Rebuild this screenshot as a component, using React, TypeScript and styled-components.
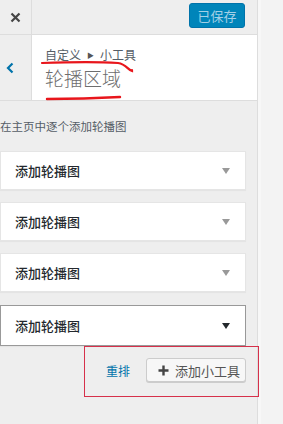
import React from "react";
import styled, { createGlobalStyle } from "styled-components";

const GlobalStyle = createGlobalStyle`
  html, body {
    margin: 0;
    padding: 0;
    background: #eeeeee;
  }
  * {
    box-sizing: border-box;
  }
`;

const Page = styled.div`
  position: relative;
  display: flex;
  width: 283px;
  height: 424px;
  overflow: hidden;
  font-family: "Noto Sans CJK SC", "Noto Sans", sans-serif;
  color: #555d66;
`;

const Sidebar = styled.div`
  display: flex;
  flex-direction: column;
  width: 258px;
  background: #eeeeee;
  border-right: 1px solid #dddddd;
`;

const Gutter = styled.div`
  flex: 1;
  background: #f3f3f3;
  border-left: 3px solid #f7f7f7;
`;

const Header = styled.div`
  display: flex;
  align-items: center;
  height: 35px;
  border-bottom: 1px solid #dddddd;
`;

const CloseButton = styled.div`
  display: flex;
  align-items: center;
  justify-content: center;
  width: 32px;
  height: 100%;
  border-right: 1px solid #dddddd;
  color: #444;
`;

const SaveButton = styled.button`
  margin-left: auto;
  margin-right: 12px;
  margin-bottom: 4px;
  width: 56px;
  height: 25px;
  padding: 0;
  border: 1px solid #0073aa;
  border-radius: 3px;
  background: #0085ba;
  color: #a3d0e6;
  font-family: inherit;
  font-size: 13px;
  line-height: 23px;
`;

const TitleRow = styled.div`
  display: flex;
  height: 66px;
  border-bottom: 1px solid #dddddd;
`;

const BackButton = styled.div`
  display: flex;
  align-items: center;
  padding-left: 6px;
  width: 32px;
  border-right: 1px solid #dddddd;
  color: #0073aa;
`;

const TitleBox = styled.div`
  position: relative;
  flex: 1;
  background: #ffffff;
  padding: 11px 0 0 13px;
`;

const Crumb = styled.div`
  font-size: 12px;
  line-height: 18px;
  color: #555d66;
  display: flex;
  align-items: center;
  gap: 6px;
`;

const Caret = styled.span`
  font-size: 7px;
  color: #555;
`;

const Title = styled.div`
  margin-top: 1px;
  font-size: 19px;
  font-weight: 300;
  line-height: 26px;
  color: #6d6d6d;
`;

const Scribble = styled.svg`
  position: absolute;
  left: 0;
  top: 0;
  overflow: visible;
  pointer-events: none;
`;

const Body = styled.div`
  display: flex;
  flex-direction: column;
  padding: 16px 11px 0 0;
`;

const Description = styled.p`
  margin: 0 0 16px;
  font-size: 11.5px;
  line-height: 18px;
  color: #555d66;
`;

const WidgetList = styled.div`
  display: flex;
  flex-direction: column;
  gap: 12px;
`;

const Widget = styled.div<{ $active?: boolean }>`
  display: flex;
  align-items: center;
  justify-content: space-between;
  height: ${(p) => (p.$active ? 41 : 39)}px;
  margin-top: ${(p) => (p.$active ? 1 : 0)}px;
  padding: 0 15px 0 14px;
  background: #ffffff;
  border: 1px solid ${(p) => (p.$active ? "#999999" : "#e5e5e5")};
  box-shadow: 0 1px 1px rgba(0, 0, 0, 0.04);
  font-size: 13px;
  font-weight: 500;
  color: #23282d;
`;

const Arrow = styled.span<{ $active?: boolean }>`
  width: 0;
  height: 0;
  margin-top: 1px;
  border-left: 4px solid transparent;
  border-right: 4px solid transparent;
  border-top: 6px solid ${(p) => (p.$active ? "#23282d" : "#999999")};
`;

const Actions = styled.div`
  display: flex;
  align-items: center;
  justify-content: flex-end;
  gap: 16px;
  margin-top: 12px;
`;

const ReorderLink = styled.a`
  font-size: 12px;
  color: #0073aa;
  text-decoration: none;
`;

const AddButton = styled.button`
  display: flex;
  align-items: center;
  gap: 6px;
  width: 100px;
  height: 24px;
  padding: 0 0 0 11px;
  background: #f7f7f7;
  border: 1px solid #cccccc;
  border-radius: 3px;
  box-shadow: 0 1px 0 #cccccc;
  font-family: inherit;
  font-size: 13px;
  color: #555;
`;

const Highlight = styled.div`
  position: absolute;
  left: 84px;
  top: 346px;
  width: 175px;
  height: 51px;
  border: 1px solid #d6304a;
  pointer-events: none;
`;

const items = ["添加轮播图", "添加轮播图", "添加轮播图", "添加轮播图"];

const App = () => {
  return (
    <Page>
      <GlobalStyle />
      <Sidebar>
        <Header>
          <CloseButton>
            <svg width="11" height="11" viewBox="0 0 11 11">
              <path d="M1.5 1.5 L9.5 9.5 M9.5 1.5 L1.5 9.5" stroke="#444" strokeWidth="2.2" />
            </svg>
          </CloseButton>
          <SaveButton type="button">已保存</SaveButton>
        </Header>
        <TitleRow>
          <BackButton>
            <svg width="8" height="12" viewBox="0 0 8 12">
              <path d="M6.5 1.5 L2 6 L6.5 10.5" fill="none" stroke="#0073aa" strokeWidth="2.2" />
            </svg>
          </BackButton>
          <TitleBox>
            <Crumb>
              <span>自定义</span>
              <Caret>▶</Caret>
              <span>小工具</span>
            </Crumb>
            <Title>轮播区域</Title>
            <Scribble width="226" height="66" viewBox="0 0 226 66">
              <path
                d="M10 28 C 40 27, 70 27, 86 28 C 94 29, 96 35, 100 36 L 100 35"
                fill="none"
                stroke="#e8161c"
                strokeWidth="2.2"
                strokeLinecap="round"
              />
              <path
                d="M15 64 C 40 64, 70 63, 88 62"
                fill="none"
                stroke="#e8161c"
                strokeWidth="2.4"
                strokeLinecap="round"
              />
            </Scribble>
          </TitleBox>
        </TitleRow>
        <Body>
          <Description>在主页中逐个添加轮播图</Description>
          <WidgetList>
            {items.map((label, i) => {
              const active = i === items.length - 1;
              return (
                <Widget key={i} $active={active}>
                  <span>{label}</span>
                  <Arrow $active={active} />
                </Widget>
              );
            })}
          </WidgetList>
          <Actions>
            <ReorderLink href="#">重排</ReorderLink>
            <AddButton type="button">
              <svg width="11" height="11" viewBox="0 0 11 11">
                <path d="M5.5 0.5 V10.5 M0.5 5.5 H10.5" stroke="#444" strokeWidth="2.4" />
              </svg>
              添加小工具
            </AddButton>
          </Actions>
        </Body>
      </Sidebar>
      <Gutter />
      <Highlight />
    </Page>
  );
};

export default App;
